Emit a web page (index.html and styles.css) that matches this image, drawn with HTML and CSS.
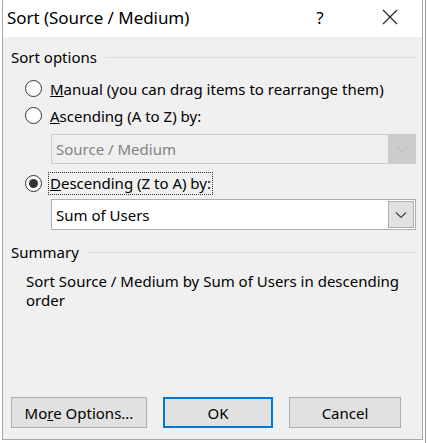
FILE: index.html
```html
<!DOCTYPE html>
<html>
<head>
<meta charset="utf-8">
<link rel="stylesheet" href="styles.css">
</head>
<body>
<div class="window">
  <div class="titlebar">
    <span class="title">Sort (Source / Medium)</span>
    <span class="help">?</span>
    <span class="close">
      <svg width="16" height="16" viewBox="0 0 16 16"><path d="M1 1 L15 15 M15 1 L1 15" stroke="#222" stroke-width="1.1" fill="none"/></svg>
    </span>
  </div>
  <div class="content">
    <div class="group-head"><span>Sort options</span><span class="rule"></span></div>
    <div class="radio-row first"><span class="radio"></span><span class="label"><u>M</u>anual (you can drag items to rearrange them)</span></div>
    <div class="radio-row"><span class="radio"></span><span class="label"><u>A</u>scending (A to Z) by:</span></div>
    <div class="select disabled"><span class="select-text">Source / Medium</span><span class="select-btn"><svg width="12" height="8" viewBox="0 0 12 8"><path d="M1 1.5 L6 6.5 L11 1.5" stroke="#bdbdbd" stroke-width="1.2" fill="none"/></svg></span></div>
    <div class="radio-row third"><span class="radio checked"></span><span class="label focus"><u>D</u>escending (Z to A) by:</span></div>
    <div class="select enabled"><span class="select-text">Sum of Users</span><span class="select-btn"><svg width="12" height="8" viewBox="0 0 12 8"><path d="M1 1.5 L6 6.5 L11 1.5" stroke="#444" stroke-width="1.2" fill="none"/></svg></span></div>
    <div class="group-head summary-head"><span>Summary</span><span class="rule"></span></div>
    <p class="summary">Sort Source / Medium by Sum of Users in descending order</p>
    <div class="footer">
      <button class="btn more">Mo<u>r</u>e Options...</button>
      <button class="btn ok">OK</button>
      <button class="btn cancel">Cancel</button>
    </div>
  </div>
</div>
</body>
</html>
```
FILE: styles.css
```css
html, body {
  margin: 0;
  padding: 0;
  background: #ffffff;
}
body {
  width: 427px;
  height: 443px;
  overflow: hidden;
  font-family: "Noto Sans", "Open Sans", sans-serif;
  color: #000;
  background: linear-gradient(to right, #ffffff 0, #ffffff 425px, #9a9a9a 425px, #9a9a9a 426px, #ffffff 426px);
}
.window {
  margin-left: 2px;
  width: 419px;
  height: 439px;
  border: 1px solid #a8a8a8;
  border-top: none;
  display: flex;
  flex-direction: column;
  background: #f0f0f0;
}
.titlebar {
  height: 37px;
  background: #ffffff;
  display: flex;
  align-items: center;
}
.title {
  margin-left: 4px;
  font-size: 17px;
  letter-spacing: -0.05px;
  padding-bottom: 2px;
}
.help {
  margin-left: auto;
  font-size: 17px;
  width: 20px;
  text-align: center;
  margin-right: 52px;
  padding-bottom: 2px;
}
.close {
  width: 16px;
  height: 16px;
  margin-right: 24px;
  margin-bottom: 4px;
  display: flex;
}
.content {
  flex: 1;
  display: flex;
  flex-direction: column;
  padding: 9px 0 0 0;
  font-size: 15px;
}
.group-head {
  height: 22px;
  display: flex;
  align-items: center;
  padding-left: 8px;
  padding-right: 6px;
}
.group-head .rule {
  flex: 1;
  height: 1px;
  background: #dcdcdc;
  margin-left: 8px;
}
.radio-row {
  height: 27px;
  display: flex;
  align-items: center;
  padding-left: 22px;
}
.radio-row.first { margin-top: 7px; }
.radio-row.third { margin-top: 6px; }
.radio {
  width: 17px;
  height: 17px;
  border: 1px solid #333;
  border-radius: 50%;
  background: #fff;
  box-sizing: border-box;
  display: flex;
  align-items: center;
  justify-content: center;
  flex: none;
}
.radio.checked::after {
  content: "";
  width: 9px;
  height: 9px;
  border-radius: 50%;
  background: #333;
}
.label {
  margin-left: 8px;
  white-space: nowrap;
}
.label.focus {
  outline: 1px dotted #333;
  outline-offset: 0;
  margin-left: 7px;
  padding: 0 1px;
  line-height: 21px;
}
.select {
  margin-left: 48px;
  width: 365px;
  height: 31px;
  box-sizing: border-box;
  display: flex;
  align-items: stretch;
}
.select.disabled {
  margin-top: 5px;
  height: 30px;
  background: #efefef;
  border: 1px solid #cccccc;
  color: #838383;
}
.select.enabled {
  margin-top: 2px;
  background: #ffffff;
  border: 1px solid #adadad;
}
.select-text {
  flex: 1;
  display: flex;
  align-items: center;
  padding-left: 4px;
}
.select-btn {
  width: 27px;
  display: flex;
  align-items: center;
  justify-content: center;
}
.disabled .select-btn {
  background: #cccccc;
}
.enabled .select-btn {
  background: #e1e1e1;
  border: 1px solid #adadad;
  margin: 1px;
  width: 24px;
}
.summary-head { margin-top: 11px; }
.summary {
  margin: 9px 0 0 23px;
  width: 385px;
  line-height: 19px;
}
.footer {
  margin-top: auto;
  margin-bottom: 11px;
  display: flex;
  padding-left: 8px;
  gap: 16px;
}
.btn {
  height: 31px;
  background: #e1e1e1;
  border: 1px solid #adadad;
  font-family: inherit;
  font-size: 15px;
  color: #000;
  padding: 0;
  box-sizing: border-box;
}
.btn.more { width: 136px; }
.btn.ok { width: 110px; border: 2px solid #0078d7; }
.btn.cancel { width: 112px; }
```
